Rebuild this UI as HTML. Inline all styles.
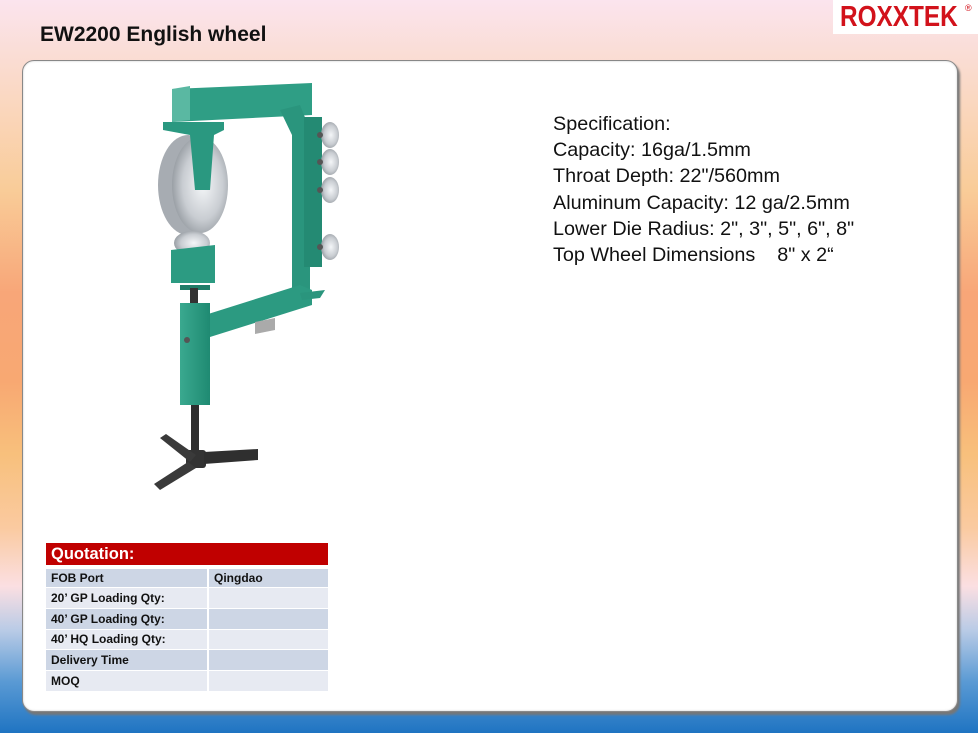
<!DOCTYPE html>
<html><head><meta charset="utf-8"><style>
*{margin:0;padding:0;box-sizing:border-box}
html,body{width:978px;height:733px;overflow:hidden}
body{position:relative;font-family:"Liberation Sans",sans-serif;
background:linear-gradient(to bottom,#fbe4ee 0%,#fad9c6 12%,#f9cc98 26%,#f8a678 40%,#f8a872 52%,#f8c07c 62%,#facaa0 72%,#fbdfe2 80%,#b9cbe6 86%,#5a9ad4 93%,#1f74c2 100%);}
.logo{position:absolute;left:833px;top:0;width:145px;height:34px;background:#fff}
.logo span{position:absolute;left:7px;top:1px;font:bold 29px "Liberation Sans",sans-serif;color:#d2121b;transform:scaleX(0.84);transform-origin:left top;letter-spacing:0}
.logo i{position:absolute;left:132px;top:3px;font:normal 9px "Liberation Sans";color:#d2121b;font-style:normal}
h1{position:absolute;left:40px;top:23px;font:bold 21px "Liberation Sans",sans-serif;color:#111;transform:scaleX(1);transform-origin:left}
.panel{position:absolute;left:22px;top:60px;width:936px;height:652px;background:#fff;border-radius:12px;border:1px solid #888;box-shadow:2px 3px 2px #777, inset 0 0 2px #ccc}
.spec{position:absolute;left:553px;top:111px;font-size:19.8px;line-height:26.2px;color:#111;white-space:pre}
table{position:absolute;left:46px;top:543px;border-collapse:collapse;width:282px;font:bold 12px "Liberation Sans",sans-serif;color:#111}
th{background:#c00000;color:#fff;text-align:left;font-size:16.5px;height:24px;padding-left:5px;border-bottom:4px solid #fff}
td{height:20.7px;padding-left:5px;border-bottom:1px solid #fff}
td:first-child{width:162px;border-right:2px solid #fff}
tr.a td{background:#cdd6e5}tr.b td{background:#e7eaf2}
</style></head><body>
<div class="logo"><span>ROXXTEK</span><i>®</i></div>
<h1>EW2200 English wheel</h1>
<div class="panel"></div>
<svg style="position:absolute;left:0;top:0" width="978" height="733">
<defs><linearGradient id="g" x1="0" x2="1"><stop offset="0" stop-color="#3aa98f"/><stop offset="1" stop-color="#1f8a72"/></linearGradient>
<radialGradient id="w" cx="0.55" cy="0.5" r="0.6"><stop offset="0" stop-color="#f4f6f8"/><stop offset="0.6" stop-color="#c9cdd2"/><stop offset="1" stop-color="#8d9399"/></radialGradient></defs>
<polygon points="172,89 312,83 312,115 172,122" fill="#2f9e85"/>
<polygon points="172,89 190,86 190,120 172,122" fill="#5ab8a2"/>
<polygon points="280,110 300,105 310,130 310,300 292,305 292,135" fill="#2a957d"/>
<rect x="304" y="117" width="18" height="150" fill="#248a73"/>
<g fill="url(#w)"><ellipse cx="330" cy="135" rx="9" ry="13"/><ellipse cx="330" cy="162" rx="9" ry="13"/><ellipse cx="330" cy="190" rx="9" ry="13"/><ellipse cx="330" cy="247" rx="9" ry="13"/></g>
<g fill="#555"><circle cx="320" cy="135" r="3"/><circle cx="320" cy="162" r="3"/><circle cx="320" cy="190" r="3"/><circle cx="320" cy="247" r="3"/></g>
<polygon points="205,315 300,285 312,290 312,305 210,337" fill="#2c9a81"/>
<polygon points="300,293 325,290 320,298 302,300" fill="#2a957d"/>
<polygon points="255,322 275,318 275,330 255,334" fill="#aaa"/>
<ellipse cx="188" cy="185" rx="30" ry="50" fill="#a7acb2"/>
<ellipse cx="200" cy="185" rx="28" ry="48" fill="url(#w)"/>
<polygon points="163,122 224,122 224,130 214,135 210,190 195,190 190,135 163,130" fill="#2a9880"/>
<ellipse cx="192" cy="243" rx="18" ry="12" fill="url(#w)"/>
<polygon points="171,250 215,245 215,283 171,283" fill="#2c9b82"/>
<rect x="180" y="285" width="30" height="5" fill="#1f7d68"/>
<rect x="190" y="288" width="8" height="17" fill="#333"/>
<rect x="180" y="303" width="30" height="102" fill="url(#g)"/>
<circle cx="187" cy="340" r="3" fill="#555"/>
<rect x="191" y="405" width="8" height="50" fill="#2e2e2e"/>
<rect x="186" y="450" width="20" height="18" rx="3" fill="#333"/>
<polygon points="160,438 166,434 196,455 190,462" fill="#3a3a3a"/>
<polygon points="204,452 258,449 258,460 204,464" fill="#2f2f2f"/>
<polygon points="188,462 196,468 160,490 154,484" fill="#3a3a3a"/>
</svg>
<div class="spec">Specification:
Capacity: 16ga/1.5mm
Throat Depth: 22"/560mm
Aluminum Capacity: 12 ga/2.5mm
Lower Die Radius: 2", 3", 5", 6", 8"
Top Wheel Dimensions    8" x 2“</div>
<table>
<tr><th colspan="2">Quotation:</th></tr>
<tr class="a"><td>FOB Port</td><td>Qingdao</td></tr>
<tr class="b"><td>20’ GP Loading Qty:</td><td></td></tr>
<tr class="a"><td>40’ GP Loading Qty:</td><td></td></tr>
<tr class="b"><td>40’ HQ Loading Qty:</td><td></td></tr>
<tr class="a"><td>Delivery Time</td><td></td></tr>
<tr class="b"><td>MOQ</td><td></td></tr>
</table>
</body></html>
